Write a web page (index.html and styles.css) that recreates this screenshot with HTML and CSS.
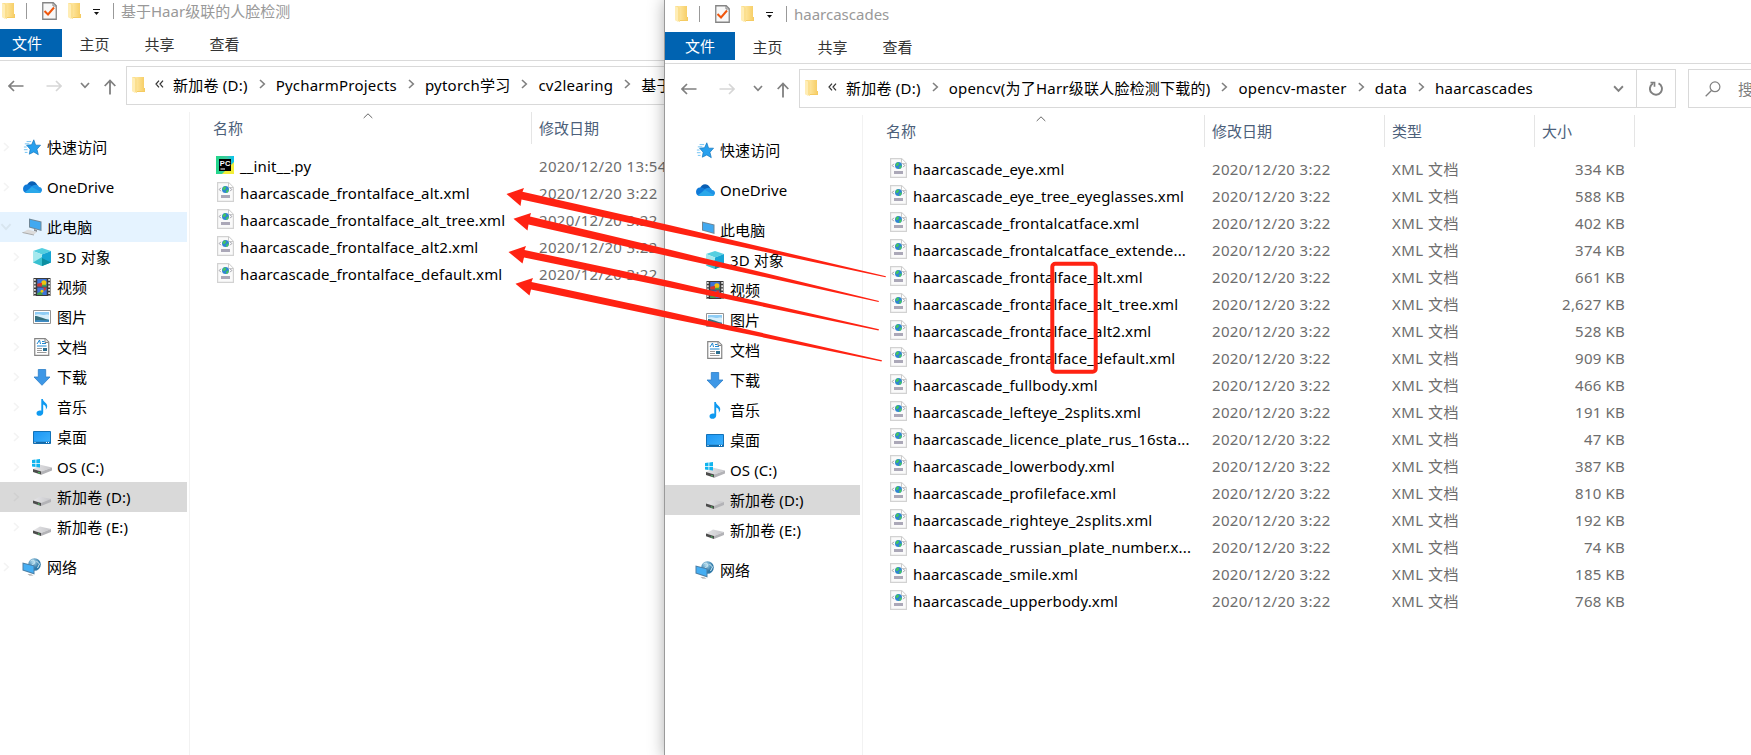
FILE: index.html
```html
<!DOCTYPE html>
<html lang="zh-CN">
<head>
    <meta charset="UTF-8">
    <meta name="viewport" content="width=device-width, initial-scale=1.0">
    <title>haarcascades</title>
    <link rel="stylesheet" href="styles.css">
</head>
<body>
    <!-- Icon sprite -->
    <svg class="sprite">
        <defs>
            <linearGradient id="gFolder" x1="0" x2="1"><stop offset="0" stop-color="#ffe9a6"/><stop offset="1" stop-color="#f7cf68"/></linearGradient>
            <linearGradient id="gBlue" x1="0" x2="1" y1="0" y2="1"><stop offset="0" stop-color="#1b96f5"/><stop offset="1" stop-color="#3fb2fb"/></linearGradient>
            <linearGradient id="gDrive" x1="0" x2="1"><stop offset="0" stop-color="#e6e6e8"/><stop offset="1" stop-color="#c6c6ca"/></linearGradient>
            <linearGradient id="gPc" x1="0" x2="1"><stop offset="0" stop-color="#21d789"/><stop offset=".6" stop-color="#3fc9a0"/><stop offset="1" stop-color="#07c3f2"/></linearGradient>
            <radialGradient id="gGlobe" cx=".4" cy=".3"><stop offset="0" stop-color="#b8dff0"/><stop offset="1" stop-color="#2f79a8"/></radialGradient>
        </defs>
        <symbol id="folder" viewBox="0 0 14 18">
            <path d="M3 1h9v11h1v4H3z" fill="#f5cb62"/>
            <path d="M3 1h9v14H3z" fill="url(#gFolder)"/>
            <path d="M0 1h3l2 2v14l-5-2z" fill="#fbdf8e"/>
            <path d="M0 1l3 1.500V17l-3-2z" fill="#ffedb5"/>
        </symbol>
        <symbol id="check" viewBox="0 0 15 18">
            <path d="M.75.75h10.500l3 3v13.500H.75z" fill="#f8f8f8" stroke="#858585" stroke-width="1.300"/>
            <path d="M11 1v3h3" fill="none" stroke="#858585"/>
            <path d="M2.500 9l3.500 3.500 6-7" fill="none" stroke="#f0560c" stroke-width="2"/>
        </symbol>
        <symbol id="caret" viewBox="0 0 8 6">
            <path d="M0 .5h7" stroke="#111"/><path d="M1 3h5L3.500 6z" fill="#111"/>
        </symbol>
        <symbol id="star" viewBox="0 0 20 20">
            <path d="M12 2l2 6 5.500 0-4 4.500 1.500 6-5-3-5 2.500 1-5.500-4-4.500 5.500-.5z" fill="#27a0ee" stroke="#1678bd" stroke-width=".8"/>
            <path d="M4 4h5M2 6.500h5M1 10h3M1 13h4M2 16h3" stroke="#67bdf2"/>
        </symbol>
        <symbol id="onedrive" viewBox="0 0 20 14">
            <path d="M5 5.500C6 1 12-1 15 4.500l1 2L9 9z" fill="#0a5fb4"/>
            <path d="M4.500 13A4.300 4.300 0 0 1 5 4.500c2-.3 3.500.5 5 1.500l4 7z" fill="#0f7ad8"/>
            <path d="M8 8c3-4 8-4 9-1 4 0 4 6 0 6H5z" fill="#1f93e6"/>
            <path d="M3 12l7-5 9 5c-.5.7-1 1-2 1H4.500z" fill="#2aa8ea"/>
        </symbol>
        <symbol id="pc" viewBox="0 0 20 18">
            <path d="M7 .5l12.500 3v9.500L7 9.500z" fill="#6f8797"/>
            <path d="M8 1.800l10.500 2.500v7.400L8 8.800z" fill="#41a9f0"/>
            <path d="M12 11l3 1v2l-3-1z" fill="#8a8f94"/>
            <path d="M6 11.500l9 2.500-3 2.500-11.500-2z" fill="#dcdcdc"/>
            <path d="M.5 14.500l11.500 2.500" stroke="#a9a9a9"/>
        </symbol>
        <!-- front window's monitor, without the keyboard -->
        <symbol id="monitor" viewBox="0 0 20 18">
            <path d="M7 .5l12.500 3v9.500L7 9.500z" fill="#6f8797"/>
            <path d="M8 1.800l10.500 2.500v7.400L8 8.800z" fill="#41a9f0"/>
        </symbol>
        <symbol id="cube" viewBox="0 0 18 18">
            <path d="M9 0l9 3-9 3.500L0 3z" fill="#55cfe0"/>
            <path d="M0 3l9 3.500V18l-9-3.500z" fill="#a5e9ee"/>
            <path d="M0 14.500L9 9v9z" fill="#38c0d0"/>
            <path d="M18 3L9 6.500V18l9-3.500z" fill="#17a5d3"/>
            <path d="M18 14.500L9 10v8z" fill="#0d8fa0"/>
        </symbol>
        <symbol id="video" viewBox="0 0 18 19">
            <path d="M0 0h18v19H0z" fill="#3a3a3a"/>
            <path d="M1.500 1v18M16.500 1v18" stroke="#e8e8e8" stroke-width="1.800" stroke-dasharray="2 1.500"/>
            <path d="M4 1h10v8H4zM4 10h10v8H4z" fill="#3d73d8"/>
            <circle cx="11" cy="5" r="2.700" fill="#f1c40f"/><path d="M4 6l5-1v4H4zM10 10l4 0-2 4z" fill="#d6372c"/>
            <path d="M9 7h5v2H9zM4 16l4-2 2 4H4z" fill="#45a049"/>
            <circle cx="9" cy="14" r="1.500" fill="#f1c40f"/>
        </symbol>
        <symbol id="picture" viewBox="0 0 18 14">
            <path d="M.5.5h17v13H.5z" fill="#fff" stroke="#949494"/>
            <path d="M2 2h14v10H2z" fill="#8fcdf5"/>
            <path d="M2 5c3-1.500 5 0 8 0s4-1 6 0v4H2z" fill="#d7effb"/>
            <path d="M2 6c3 0 7 2 14 4v2H2z" fill="#356f7c"/>
            <path d="M2 10.500c5-1 9 0 14 0V12H2z" fill="#3f8cc4"/>
        </symbol>
        <symbol id="doc" viewBox="0 0 16 18">
            <path d="M.75.6h10.500l3.500 3.500v13.300H.75z" fill="#fff" stroke="#858585" stroke-width="1.200"/>
            <path d="M11 1v3.500h3.500" fill="#eee" stroke="#858585"/>
            <path d="M3 6l2.500-4 1 4M8 3.500h2.500M8 5.500h4M3 8h9.500" fill="none" stroke="#1e88d2"/>
            <path d="M3 10.500h5M3 12.500h5M3 14.500h9.500" stroke="#9a9a9a"/>
            <path d="M9 10h4v3H9z" fill="#2c6e8f"/>
        </symbol>
        <symbol id="download" viewBox="0 0 17 17">
            <path d="M4.800.5h7.400V8h4.300l-8 8.300L.500 8h4.300z" fill="#3d97e6" stroke="#2b7dc8" stroke-width=".8"/>
        </symbol>
        <symbol id="music" viewBox="0 0 12 17">
            <path d="M5.300 0h1.600c.3 3.500 4.800 4 4.300 7.500-.2 1.800-1 2.700-1.500 3.500.8-3.500-.6-4.700-2.500-5.500v8c0 4-6.700 4.600-6.700.8 0-2.500 3-3.300 4.800-2.500z" fill="#0f9af0"/>
        </symbol>
        <symbol id="desktop" viewBox="0 0 18 13">
            <path d="M.5.5h17v12H.5z" fill="url(#gBlue)" stroke="#1272b8"/>
            <path d="M0 11.500h18" stroke="#1568a6" stroke-width="1.500"/><path d="M1.500 11.500h2M13 11.500h3.500" stroke="#fff" stroke-dasharray="1 1"/>
        </symbol>
        <symbol id="drive" viewBox="0 0 18 10">
            <path d="M0 4.500L7 .5 18 3 8 7z" fill="url(#gDrive)"/>
            <path d="M0 4.500L8 7v3L0 7.300z" fill="#4c4c4c"/>
            <path d="M18 3L8 7v3l10-4z" fill="#b3b3b7"/>
            <path d="M5 7.800l1.500.5" stroke="#4bd964"/>
        </symbol>
        <symbol id="osdrive" viewBox="0 0 20 16">
            <use href="#drive" x="1" y="5" width="19" height="11"/>
            <path d="M0 1l3.500-.5V4H0zM4.300.4L8 0v4H4.300zM0 4.800h3.500V8L0 7.500zM4.300 4.800H8v3.700l-3.700-.4z" fill="#10b4ee"/>
        </symbol>
        <symbol id="network" viewBox="0 0 19 18">
            <circle cx="12" cy="6.500" r="6.300" fill="url(#gGlobe)"/>
            <path d="M8 3c3-2 5 0 4 2s-3 1-3 3M14 3l3 3-2 4" fill="none" stroke="#d3ecf5"/>
            <path d="M0 4.500l12 3v9L0 12.500z" fill="#4c7fa5"/>
            <path d="M1 5.800l10 2.500v6.800L1 11.800z" fill="#45aef3"/>
            <path d="M5 16l4 .5 2 1H7z" fill="#9b9b9b"/>
        </symbol>
        <symbol id="xml" viewBox="0 0 17 20">
            <path d="M.6.6h11l4.800 4.800v14H.6z" fill="#fafafa" stroke="#d2d2d2" stroke-width="1.200"/>
            <path d="M11.500 1v4.500h4.500" fill="#fff" stroke="#cacaca"/>
            <circle cx="8.500" cy="7.500" r="3.500" fill="#2f86d0"/>
            <path d="M7 4.500c2-.5 2.500 1 1.500 2.500S6 8 5.500 7zM9 9l2.500-2c.5 2-.5 3.500-2 4z" fill="#45c85a"/>
            <path d="M3.800 5.800L2.300 7.500l1.500 1.700M13.200 5.800l1.500 1.700-1.500 1.700" fill="none" stroke="#9a9aa4"/>
            <path d="M4 13h9v3H4z" fill="#aba8b8"/>
        </symbol>
        <symbol id="pycharm" viewBox="0 0 18 18">
            <path d="M0 0h18v18H0z" fill="url(#gPc)"/><path d="M18 6v12H6z" fill="#f3ee3a"/>
            <path d="M3 3h12v12H3z" fill="#000"/><path d="M4.500 13h4.500" stroke="#fff"/>
            <text class="pc-text" x="3.800" y="9.500">PC</text>
        </symbol>
        <symbol id="back" viewBox="0 0 16 12"><path d="M15.500 6H1.500M6 1L1 6l5 5" fill="none" stroke="currentColor" stroke-width="1.700"/></symbol>
        <symbol id="fwd" viewBox="0 0 16 12"><path d="M.5 6h14M10 1l5 5-5 5" fill="none" stroke="currentColor" stroke-width="1.700"/></symbol>
        <symbol id="up" viewBox="0 0 12 16"><path d="M6 15.500V1.500M.7 7L6 1.500 11.300 7" fill="none" stroke="currentColor" stroke-width="1.800"/></symbol>
        <symbol id="down" viewBox="0 0 10 7"><path d="M1 1l4 4.300L9 1" fill="none" stroke="currentColor" stroke-width="1.700"/></symbol>
        <symbol id="right" viewBox="0 0 7 10"><path d="M1 1l4.300 4L1 9" fill="none" stroke="currentColor" stroke-width="1.600"/></symbol>
        <symbol id="sort" viewBox="0 0 10 6"><path d="M.7 5L5 .8 9.300 5" fill="none" stroke="currentColor" stroke-width="1"/></symbol>
        <symbol id="laquo" viewBox="0 0 9 8"><path d="M4 .7L1 4l3 3.300M8 .7L5 4l3 3.300" fill="none" stroke="#333" stroke-width="1.200"/></symbol>
        <symbol id="refresh" viewBox="0 0 15 16">
            <path d="M9.500 2.300a6 6 0 1 1-5.500.2" fill="none" stroke="currentColor" stroke-width="1.900"/>
            <path d="M1.500 1.700h4v4" fill="none" stroke="currentColor" stroke-width="1.700"/>
        </symbol>
        <symbol id="search" viewBox="0 0 16 16">
            <circle cx="10" cy="5.800" r="4.900" fill="none" stroke="currentColor" stroke-width="1.200"/>
            <path d="M6.500 9.500L.7 15.300" stroke="currentColor" stroke-width="1.300"/>
        </symbol>
    </svg>

    <div class="screen">
        <!-- Back window -->
        <div class="window back-window">
            <div class="titlebar">
                <svg class="t-folder"><use href="#folder"/></svg><span class="sep"></span>
                <svg class="t-check"><use href="#check"/></svg><svg class="t-folder second"><use href="#folder"/></svg>
                <svg class="t-caret"><use href="#caret"/></svg><span class="sep last"></span>
                <span class="title">基于Haar级联的人脸检测</span>
            </div>
            <div class="tabs"><span class="tab active">文件</span><span class="tab">主页</span><span class="tab">共享</span><span class="tab">查看</span></div>
            <div class="navbar">
                <svg class="n-back"><use href="#back"/></svg><svg class="n-fwd"><use href="#fwd"/></svg>
                <svg class="n-down"><use href="#down"/></svg><svg class="n-up"><use href="#up"/></svg>
                <div class="address">
                    <svg class="a-folder"><use href="#folder"/></svg><svg class="a-laquo"><use href="#laquo"/></svg>
                    <span>新加卷 (D:)</span><svg class="crumb"><use href="#right"/></svg>
                    <span>PycharmProjects</span><svg class="crumb"><use href="#right"/></svg>
                    <span>pytorch学习</span><svg class="crumb"><use href="#right"/></svg>
                    <span>cv2learing</span><svg class="crumb"><use href="#right"/></svg>
                    <span>基于Haar级联的人脸检测</span>
                </div>
            </div>
            <div class="content">
                <div class="sidebar">
                    <div class="node"><svg class="exp"><use href="#right"/></svg><svg class="icon"><use href="#star"/></svg>快速访问</div>
                    <div class="node gap"><svg class="exp"><use href="#right"/></svg><svg class="icon i-cloud"><use href="#onedrive"/></svg>OneDrive</div>
                    <div class="node gap hover"><svg class="exp open"><use href="#down"/></svg><svg class="icon"><use href="#pc"/></svg>此电脑</div>
                    <div class="node sub"><svg class="exp"><use href="#right"/></svg><svg class="icon"><use href="#cube"/></svg>3D 对象</div>
                    <div class="node sub"><svg class="exp"><use href="#right"/></svg><svg class="icon"><use href="#video"/></svg>视频</div>
                    <div class="node sub"><svg class="exp"><use href="#right"/></svg><svg class="icon i-pic"><use href="#picture"/></svg>图片</div>
                    <div class="node sub"><svg class="exp"><use href="#right"/></svg><svg class="icon"><use href="#doc"/></svg>文档</div>
                    <div class="node sub"><svg class="exp"><use href="#right"/></svg><svg class="icon i-small"><use href="#download"/></svg>下载</div>
                    <div class="node sub"><svg class="exp"><use href="#right"/></svg><svg class="icon i-small"><use href="#music"/></svg>音乐</div>
                    <div class="node sub"><svg class="exp"><use href="#right"/></svg><svg class="icon i-desk"><use href="#desktop"/></svg>桌面</div>
                    <div class="node sub"><svg class="exp"><use href="#right"/></svg><svg class="icon i-os"><use href="#osdrive"/></svg>OS (C:)</div>
                    <div class="node sub selected"><svg class="exp"><use href="#right"/></svg><svg class="icon i-drive"><use href="#drive"/></svg>新加卷 (D:)</div>
                    <div class="node sub"><svg class="exp"><use href="#right"/></svg><svg class="icon i-drive"><use href="#drive"/></svg>新加卷 (E:)</div>
                    <div class="node gap"><svg class="exp"><use href="#right"/></svg><svg class="icon"><use href="#network"/></svg>网络</div>
                </div>
                <div class="files">
                    <div class="row head"><span class="name">名称<svg class="sort"><use href="#sort"/></svg></span><span class="date">修改日期</span></div>
                    <div class="row"><span class="name"><svg class="pyicon"><use href="#pycharm"/></svg>__init__.py</span><span class="date">2020/12/20 13:54</span></div>
                    <div class="row"><span class="name"><svg><use href="#xml"/></svg>haarcascade_frontalface_alt.xml</span><span class="date">2020/12/20 3:22</span></div>
                    <div class="row"><span class="name"><svg><use href="#xml"/></svg>haarcascade_frontalface_alt_tree.xml</span><span class="date">2020/12/20 3:22</span></div>
                    <div class="row"><span class="name"><svg><use href="#xml"/></svg>haarcascade_frontalface_alt2.xml</span><span class="date">2020/12/20 3:22</span></div>
                    <div class="row"><span class="name"><svg><use href="#xml"/></svg>haarcascade_frontalface_default.xml</span><span class="date">2020/12/20 3:22</span></div>
                </div>
            </div>
        </div>

        <!-- Front window -->
        <div class="window front-window">
            <div class="titlebar">
                <svg class="t-folder"><use href="#folder"/></svg><span class="sep"></span>
                <svg class="t-check"><use href="#check"/></svg><svg class="t-folder second"><use href="#folder"/></svg>
                <svg class="t-caret"><use href="#caret"/></svg><span class="sep last"></span>
                <span class="title">haarcascades</span>
            </div>
            <div class="tabs"><span class="tab active">文件</span><span class="tab">主页</span><span class="tab">共享</span><span class="tab">查看</span></div>
            <div class="navbar">
                <svg class="n-back"><use href="#back"/></svg><svg class="n-fwd"><use href="#fwd"/></svg>
                <svg class="n-down"><use href="#down"/></svg><svg class="n-up"><use href="#up"/></svg>
                <div class="address">
                    <svg class="a-folder"><use href="#folder"/></svg><svg class="a-laquo"><use href="#laquo"/></svg>
                    <span>新加卷 (D:)</span><svg class="crumb"><use href="#right"/></svg>
                    <span>opencv(为了Harr级联人脸检测下载的)</span><svg class="crumb"><use href="#right"/></svg>
                    <span>opencv-master</span><svg class="crumb"><use href="#right"/></svg>
                    <span>data</span><svg class="crumb"><use href="#right"/></svg>
                    <span>haarcascades</span>
                    <svg class="a-drop"><use href="#down"/></svg>
                    <div class="a-refresh"><svg><use href="#refresh"/></svg></div>
                </div>
                <div class="searchbox"><svg><use href="#search"/></svg><span>搜索</span></div>
            </div>
            <div class="content">
                <div class="sidebar">
                    <div class="node"><span class="exp"></span><svg class="icon"><use href="#star"/></svg>快速访问</div>
                    <div class="node gap"><span class="exp"></span><svg class="icon i-cloud"><use href="#onedrive"/></svg>OneDrive</div>
                    <div class="node gap"><span class="exp"></span><svg class="icon"><use href="#monitor"/></svg>此电脑</div>
                    <div class="node sub"><span class="exp"></span><svg class="icon"><use href="#cube"/></svg>3D 对象</div>
                    <div class="node sub"><span class="exp"></span><svg class="icon"><use href="#video"/></svg>视频</div>
                    <div class="node sub"><span class="exp"></span><svg class="icon i-pic"><use href="#picture"/></svg>图片</div>
                    <div class="node sub"><span class="exp"></span><svg class="icon"><use href="#doc"/></svg>文档</div>
                    <div class="node sub"><span class="exp"></span><svg class="icon i-small"><use href="#download"/></svg>下载</div>
                    <div class="node sub"><span class="exp"></span><svg class="icon i-small"><use href="#music"/></svg>音乐</div>
                    <div class="node sub"><span class="exp"></span><svg class="icon i-desk"><use href="#desktop"/></svg>桌面</div>
                    <div class="node sub"><span class="exp"></span><svg class="icon i-os"><use href="#osdrive"/></svg>OS (C:)</div>
                    <div class="node sub selected"><span class="exp"></span><svg class="icon i-drive"><use href="#drive"/></svg>新加卷 (D:)</div>
                    <div class="node sub"><span class="exp"></span><svg class="icon i-drive"><use href="#drive"/></svg>新加卷 (E:)</div>
                    <div class="node gap"><span class="exp"></span><svg class="icon"><use href="#network"/></svg>网络</div>
                </div>
                <div class="files">
                    <div class="row head"><span class="name">名称<svg class="sort"><use href="#sort"/></svg></span><span class="date">修改日期</span><span class="type">类型</span><span class="size">大小</span></div>
                    <div class="row"><span class="name"><svg><use href="#xml"/></svg>haarcascade_eye.xml</span><span class="date">2020/12/20 3:22</span><span class="type">XML 文档</span><span class="size">334 KB</span></div>
                    <div class="row"><span class="name"><svg><use href="#xml"/></svg>haarcascade_eye_tree_eyeglasses.xml</span><span class="date">2020/12/20 3:22</span><span class="type">XML 文档</span><span class="size">588 KB</span></div>
                    <div class="row"><span class="name"><svg><use href="#xml"/></svg>haarcascade_frontalcatface.xml</span><span class="date">2020/12/20 3:22</span><span class="type">XML 文档</span><span class="size">402 KB</span></div>
                    <div class="row"><span class="name"><svg><use href="#xml"/></svg>haarcascade_frontalcatface_extende...</span><span class="date">2020/12/20 3:22</span><span class="type">XML 文档</span><span class="size">374 KB</span></div>
                    <div class="row"><span class="name"><svg><use href="#xml"/></svg>haarcascade_frontalface_alt.xml</span><span class="date">2020/12/20 3:22</span><span class="type">XML 文档</span><span class="size">661 KB</span></div>
                    <div class="row"><span class="name"><svg><use href="#xml"/></svg>haarcascade_frontalface_alt_tree.xml</span><span class="date">2020/12/20 3:22</span><span class="type">XML 文档</span><span class="size">2,627 KB</span></div>
                    <div class="row"><span class="name"><svg><use href="#xml"/></svg>haarcascade_frontalface_alt2.xml</span><span class="date">2020/12/20 3:22</span><span class="type">XML 文档</span><span class="size">528 KB</span></div>
                    <div class="row"><span class="name"><svg><use href="#xml"/></svg>haarcascade_frontalface_default.xml</span><span class="date">2020/12/20 3:22</span><span class="type">XML 文档</span><span class="size">909 KB</span></div>
                    <div class="row"><span class="name"><svg><use href="#xml"/></svg>haarcascade_fullbody.xml</span><span class="date">2020/12/20 3:22</span><span class="type">XML 文档</span><span class="size">466 KB</span></div>
                    <div class="row"><span class="name"><svg><use href="#xml"/></svg>haarcascade_lefteye_2splits.xml</span><span class="date">2020/12/20 3:22</span><span class="type">XML 文档</span><span class="size">191 KB</span></div>
                    <div class="row"><span class="name"><svg><use href="#xml"/></svg>haarcascade_licence_plate_rus_16sta...</span><span class="date">2020/12/20 3:22</span><span class="type">XML 文档</span><span class="size">47 KB</span></div>
                    <div class="row"><span class="name"><svg><use href="#xml"/></svg>haarcascade_lowerbody.xml</span><span class="date">2020/12/20 3:22</span><span class="type">XML 文档</span><span class="size">387 KB</span></div>
                    <div class="row"><span class="name"><svg><use href="#xml"/></svg>haarcascade_profileface.xml</span><span class="date">2020/12/20 3:22</span><span class="type">XML 文档</span><span class="size">810 KB</span></div>
                    <div class="row"><span class="name"><svg><use href="#xml"/></svg>haarcascade_righteye_2splits.xml</span><span class="date">2020/12/20 3:22</span><span class="type">XML 文档</span><span class="size">192 KB</span></div>
                    <div class="row"><span class="name"><svg><use href="#xml"/></svg>haarcascade_russian_plate_number.x...</span><span class="date">2020/12/20 3:22</span><span class="type">XML 文档</span><span class="size">74 KB</span></div>
                    <div class="row"><span class="name"><svg><use href="#xml"/></svg>haarcascade_smile.xml</span><span class="date">2020/12/20 3:22</span><span class="type">XML 文档</span><span class="size">185 KB</span></div>
                    <div class="row"><span class="name"><svg><use href="#xml"/></svg>haarcascade_upperbody.xml</span><span class="date">2020/12/20 3:22</span><span class="type">XML 文档</span><span class="size">768 KB</span></div>
                </div>
            </div>
        </div>

        <!-- Red marks over both windows -->
        <svg class="marks" viewBox="0 0 1751 755">
            <polygon points="506.500,194 524,188 522.500,191.800 670,225.300 886,276.200 885.500,277.300 670,231.800 521.500,199.500 520.500,206"/>
            <polygon points="513.500,218.700 531,213 530,216.500 670,249.800 879,301 878.500,302.100 670,256.500 528.500,224.500 527.500,230.500"/>
            <polygon points="508.500,252 526,246 524.500,250 670,281 879,329.200 878.500,330.400 670,287.500 524,257.500 522.500,263.500"/>
            <polygon points="515.500,283.700 533,278 531.500,282 670,312 882,360.200 881.500,361.400 670,318.500 531,289.500 529.500,295.500"/>
            <rect x="1052.300" y="263.700" width="43.400" height="108" rx="3"/>
        </svg>
    </div>
</body>
</html>
```
FILE: styles.css
```css
body {
    margin: 0;
    overflow: hidden;
    background: #fff;
    font-family: "Noto Sans", "Noto Sans CJK SC", sans-serif;
    font-size: 15px;
    line-height: 20px;
    color: #000;
}

svg {
    display: block;
    flex: none;
}

.sprite {
    position: absolute;
    width: 0;
    height: 0;
}

.pc-text {
    font: bold 7.5px "Liberation Sans", sans-serif;
    fill: #fff;
}

.screen {
    position: relative;
    display: flex;
    width: 1751px;
    height: 755px;
    overflow: hidden;
}

.window {
    flex: none;
    display: flex;
    flex-direction: column;
    height: 758px;
    background: #fff;
    white-space: nowrap;
}

.back-window {
    width: 673px;
    margin: -3px 0 0 -8px;
    overflow: hidden;
}

.front-window {
    width: 1086px;
    z-index: 1;
    box-shadow: 0 0 0 1px #9a9a9a, 0 0 16px rgba(0, 0, 0, 0.35);
}

/* Title bar */
.titlebar {
    display: flex;
    align-items: center;
    height: 32px;
    padding: 0 0 5px 10px;
    box-sizing: border-box;
}

.t-folder {
    width: 14px;
    height: 18px;
}

.t-folder.second {
    margin-left: 11px;
}

.t-check {
    width: 15px;
    height: 18px;
    margin-left: 15px;
}

.t-caret {
    width: 8px;
    height: 6px;
    margin: 3px 12px 0 11px;
}

.sep {
    width: 1px;
    height: 16px;
    margin-left: 10px;
    background: #999;
}

.sep.last {
    margin: 0 7px 0 0;
}

.title {
    color: #999;
}

/* Ribbon tabs */
.tabs {
    display: flex;
    height: 31px;
    border-bottom: 1px solid #dadada;
}

.tab {
    width: 65px;
    height: 28px;
    line-height: 31px;
    text-align: center;
    color: #333;
}

.tab.active {
    width: 70px;
    line-height: 28px;
    background: #0063b1;
    color: #fff;
}

/* Address row */
.navbar {
    display: flex;
    align-items: center;
    height: 39px;
    padding: 5px 0 7px 16px;
    overflow: hidden;
    color: #808080;
}

.n-back,
.n-fwd {
    width: 16px;
    height: 12px;
}

.n-fwd {
    margin-left: 22px;
    color: #d6d6d6;
}

.n-down {
    width: 10px;
    height: 7px;
    margin-left: 18px;
}

.n-up {
    width: 12px;
    height: 16px;
    margin: 2px 10px 0 14px;
}

.address {
    display: flex;
    align-items: center;
    width: 877px;
    height: 39px;
    box-sizing: border-box;
    flex: none;
    border: 1px solid #d9d9d9;
    padding-left: 5px;
}

.address span {
    margin-bottom: 2px;
    color: #000;
    letter-spacing: 0.22px;
}

.a-folder {
    width: 14px;
    height: 18px;
    margin-bottom: 2px;
}

.a-laquo {
    width: 9px;
    height: 8px;
    margin: 0 9px 4px 9px;
}

.crumb {
    width: 7px;
    height: 10px;
    margin: 0 10px 3px 11px;
}

.a-drop {
    width: 11px;
    height: 8px;
    margin: 0 12px 0 auto;
}

.a-refresh {
    display: flex;
    align-items: center;
    justify-content: center;
    width: 38px;
    height: 37px;
    border-left: 1px solid #d9d9d9;
}

.a-refresh svg {
    width: 15px;
    height: 16px;
}

.searchbox {
    display: flex;
    align-items: center;
    width: 100px;
    height: 37px;
    margin-left: 12px;
    padding-left: 16px;
    border: 1px solid #d9d9d9;
    flex: none;
}

.searchbox svg {
    width: 16px;
    height: 16px;
    margin-right: 17px;
}

/* Body */
.content {
    flex: 1;
    display: flex;
}

.sidebar {
    width: 197px;
    padding-top: 20px;
    border-right: 1px solid #f2f2f2;
    flex: none;
}

.node {
    display: flex;
    align-items: center;
    width: 195px;
    height: 30px;
    letter-spacing: 0.1px;
}

.node.gap {
    margin-top: 10px;
}

.node.hover {
    background: #e5f3ff;
}

.node.selected {
    background: #d9d9d9;
}

.exp {
    width: 7px;
    height: 10px;
    margin: 0 12px 0 11px;
    color: #f3f3f3;
}

.exp.open {
    width: 12px;
    height: 8px;
    margin: 0 10px 0 8px;
    color: #d8e5ef;
}

.node.sub .exp {
    margin-left: 21px;
}

.selected .exp {
    color: #d0d0d0;
}

.icon {
    width: 20px;
    height: 18px;
    margin-right: 5px;
}

.i-cloud,
.i-pic {
    height: 14px;
}

.i-small {
    height: 17px;
}

.i-desk {
    height: 13px;
}

.i-os {
    height: 16px;
}

.i-drive {
    height: 10px;
    margin-top: 7px;
}

/* File list */
.files {
    flex: 1;
}

.row {
    display: flex;
    height: 27px;
    line-height: 27px;
    color: #6d6d6d;
}

.row span {
    box-sizing: border-box;
    flex: none;
}

.row .name {
    display: flex;
    align-items: center;
    width: 342px;
    padding-left: 27px;
    color: #000;
    letter-spacing: 0.14px;
}

.name svg {
    width: 17px;
    height: 20px;
    margin: 0 6px 3px 0;
}

.name .pyicon {
    width: 18px;
    height: 18px;
    margin: 0 6px 3px -1px;
}

.date {
    width: 180px;
    padding-left: 7px;
    letter-spacing: 0.35px;
}

.type {
    width: 150px;
    padding-left: 7px;
    letter-spacing: 0.45px;
}

.size {
    width: 100px;
    padding-right: 10px;
    text-align: right;
    letter-spacing: 0.2px;
}

.head {
    height: 32px;
    margin-bottom: 9px;
    line-height: 32px;
}

.row.head span {
    padding-left: 7px;
    border-right: 1px solid #e5e5e5;
    color: #4c607a;
    text-align: left;
    letter-spacing: 0;
}

.row.head .name {
    position: relative;
    padding-left: 23px;
}

.head .sort {
    position: absolute;
    left: 173px;
    top: 1px;
    width: 10px;
    height: 6px;
    margin: 0;
    color: #666;
}

/* Annotation layer */
.marks {
    position: absolute;
    left: 0;
    top: 0;
    width: 1751px;
    height: 755px;
    z-index: 2;
}

.marks polygon {
    fill: #ff2212;
}

.marks rect {
    fill: none;
    stroke: #ff2212;
    stroke-width: 4;
}
```
